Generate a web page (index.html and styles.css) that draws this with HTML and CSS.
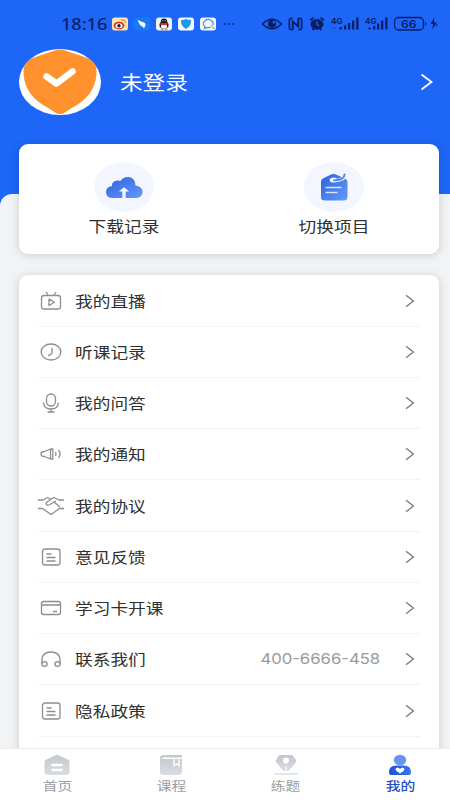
FILE: index.html
```html
<!DOCTYPE html>
<html lang="zh-CN">
<head>
<meta charset="utf-8">
<title>我的</title>
<link rel="stylesheet" href="styles.css">
</head>
<body>
<svg class="defs" width="0" height="0">
  <defs>
    <linearGradient id="blue" x1="0" y1="0" x2="1" y2="1"><stop offset="0" stop-color="#2b62dc"/><stop offset="1" stop-color="#6699fb"/></linearGradient>
    <linearGradient id="person" x1="0" y1="0" x2="1" y2="0"><stop offset="0" stop-color="#1f55d5"/><stop offset="1" stop-color="#3973f2"/></linearGradient>
    <linearGradient id="grey" x1="0" y1="0" x2="0" y2="1"><stop offset="0" stop-color="#c3c8ce"/><stop offset="1" stop-color="#d9dce2"/></linearGradient>
    <symbol id="chevron" viewBox="0 0 10 14"><path d="M1 1.200 8.400 7 1 12.800"/></symbol>
    <symbol id="note" viewBox="0 0 28 20"><rect x="5.500" y="2" width="17.500" height="16" rx="2.500"/><path d="M9.500 7h5M9.500 10.500h9M9.500 14h9"/></symbol>
  </defs>
</svg>
<div class="phone">
  <header class="header">
    <div class="status">
      <span class="clock">18:16</span>
      <svg class="apps" width="125" height="16" viewBox="111 16 125 16">
        <rect x="112" y="17.5" width="16" height="13" rx="3" fill="#ffe6a8"/>
        <ellipse cx="119" cy="25.5" rx="5.3" ry="3.8" fill="#d9282f"/><ellipse cx="119" cy="25.7" rx="3.6" ry="2.5" fill="#fff"/><circle cx="119" cy="25.8" r="1.7" fill="#222"/><path d="M121 20q4-1 4.500 3" fill="none" stroke="#ef862b" stroke-width="1.300"/>
        <rect x="134" y="17.500" width="16" height="13" rx="3" fill="#1679f5"/><path d="M137.500 20l7.500 3 .5 2-1.500 3.500-1-1.500-3-2z" fill="#fff"/>
        <rect x="156" y="17.500" width="16" height="13" rx="3" fill="#f2f3f7"/><ellipse cx="164" cy="25" rx="4.600" ry="4" fill="#171923"/><ellipse cx="164" cy="21.500" rx="3.200" ry="3" fill="#171923"/><ellipse cx="164" cy="26.300" rx="3" ry="2.500" fill="#fff"/><path d="M160.500 23.500q3.500 1.800 7 0" stroke="#df3030" stroke-width="1.600" fill="none"/><path d="M161 29.500h2.500M165 29.500h2.500" stroke="#f39c24" stroke-width="1.300"/><path d="M162.500 20.800h.8M164.800 20.800h.8" stroke="#fff"/>
        <rect x="178" y="17.500" width="16" height="13" rx="3" fill="#f5faff"/><path d="M186 19q3 1.300 5 1 .5 6-5 9-5.500-3-5-9 2 .3 5-1z" fill="#169ae9"/>
        <rect x="200" y="17.500" width="16" height="13" rx="3" fill="#f5f8fc"/><path d="M211 27q-2 1-4 .5l-2.500 1 .4-2q-3-2.500-.5-5.200 3.500-3.500 7.500-.3 2 2 .8 4" fill="none" stroke="#4690dc" stroke-width="1.200"/><circle cx="212" cy="26" r="1" fill="#f5a832"/><circle cx="213.500" cy="28" r="1" fill="#4bc478"/>
        <g fill="#0a2a80"><circle cx="225" cy="24" r="1"/><circle cx="229.200" cy="24" r="1"/><circle cx="233.400" cy="24" r="1"/></g>
      </svg>
      <svg class="signals" width="178" height="18" viewBox="261 15 178 18" fill="#081f66">
        <path d="M262.500 24q9.500-9.500 19 0-9.500 9.500-19 0z" fill="none" stroke="#081f66" stroke-width="1.500"/><circle cx="272" cy="23.800" r="4"/><circle cx="273.800" cy="22.200" r="1.200" fill="#1d66f5"/>
        <g fill="none" stroke="#081f66" stroke-width="1.600"><path d="M292.500 18.300h-1q-2.200 0-2.200 2.500v6.500q0 2.500 2.200 2.500h1M298.500 18.300h1q2.200 0 2.200 2.500v6.500q0 2.500-2.200 2.500h-1"/><path d="M292.700 30v-8.500l5.600 5V18" stroke-width="2"/></g>
        <ellipse cx="317" cy="24.300" rx="6.500" ry="5.400"/><path d="M310 20.300l3.500-2.600M324 20.300l-3.500-2.600M312.500 30l2-2M321.500 30l-2-2" stroke="#081f66" stroke-width="1.800"/><path d="M317 21v3.500l2.300 1.500" stroke="#1d66f5" stroke-width="1.200" fill="none"/>
        <text x="331" y="23.500" class="net" textLength="11.500" lengthAdjust="spacingAndGlyphs">4G</text><path d="M339.500 27h2.300v2.500h-2.300zM344 25.500h2.300v4H344zM348 23h2.300v6.500H348zM352 20.500h2.300v9H352zM356.200 17.500h2.300v12h-2.300z"/><path d="M332 28h4" stroke="#234fb5"/>
        <text x="365" y="23.500" class="net" textLength="11.500" lengthAdjust="spacingAndGlyphs">4G</text><path d="M368.500 27.500h2.300v2h-2.300zM373 26h2.300v3.500H373zM377 23.500h2.300v6H377zM381 20.500h2.300v9H381zM385.200 17.500h2.300v12h-2.300z"/>
        <rect x="394.500" y="17.500" width="29" height="12.500" rx="4" fill="none" stroke="#081f66" stroke-width="1.300"/><path d="M425.300 21.500q2.400 2.300 0 4.600z"/>
        <text x="401" y="27.900" class="charge" textLength="15.500" lengthAdjust="spacingAndGlyphs">66</text>
        <path d="M434.300 17.500l-3.800 6.500h2.700l-1 5.500 4.600-7h-2.900z"/><path d="M436 24.500h1.500l-1.200 3" />
      </svg>
    </div>
    <div class="profile">
      <svg class="avatar" width="82" height="68" viewBox="0 0 82 68"><ellipse cx="41" cy="34" rx="41" ry="33" fill="#fff"/><path d="M41 1.500Q46 2 52 4.500 64 8 71 11.500 77 15 77.500 22C78 36 72 48 58 57Q49 62 46 64.500 41 67.500 36 64.500 33 62 24 57C10 48 4 36 4.500 22Q5 15 11 11.500 18 8 30 4.500 36 2 41 1.500z" fill="#ff922d"/><path d="M27.500 28.500 37.500 35.500 53.500 23.500" fill="none" stroke="#fff" stroke-width="6.500" stroke-linecap="round" stroke-linejoin="round"/></svg>
      <span class="name">未登录</span>
      <svg class="go" width="13" height="18" viewBox="0 0 13 18"><path d="M1.500 1.500 11.500 9l-10 7.500"/></svg>
    </div>
  </header>
  <main class="content">
    <section class="card actions">
      <div class="action">
        <svg width="60" height="50" viewBox="0 0 60 50"><ellipse cx="30" cy="25" rx="30" ry="25" fill="#f3f6fe"/><path d="M18 36q-6-.5-6-6 0-5 6-6-.5-5 6-5.500 1.500 0 2.500.5Q29 15 34 15q7 0 7.500 8.500 7 1 7 6.500T42 36z" fill="url(#blue)"/><path d="M28.300 36v-6.500h-3.500l5.200-4.300 5.200 4.300h-3.500v6.500z" fill="#f4f7ff"/></svg>
        <span class="label">下载记录</span>
      </div>
      <div class="action">
        <svg width="60" height="50" viewBox="0 0 60 50"><ellipse cx="30" cy="25" rx="30" ry="25" fill="#f3f6fe"/><path d="M17 19.500q0-2 2-3l7-3.500q3.500-2 7 0l8 3.500q2.500 1 2.500 3.500v15q0 3.500-4 3.500H21q-4 0-4-3.500z" fill="url(#blue)"/><ellipse cx="29.500" cy="18" rx="3.800" ry="2.600" fill="#eff4ff"/><path d="M30.500 18.500Q41 18.500 40.800 12.500" fill="none" stroke="#eff4ff" stroke-width="3.200"/><path d="M30 18.300Q40.500 18.300 40.500 12.500" fill="none" stroke="#4b7de7" stroke-width="1.800" stroke-linecap="round"/><path d="M21.500 25.500h16M21.500 30.500h12" stroke="#d6e4ff" stroke-width="1.500"/></svg>
        <span class="label">切换项目</span>
      </div>
    </section>
    <section class="card list">
      <div class="row"><svg class="icon" viewBox="0 0 28 20"><rect x="4.500" y="4.500" width="19" height="13.500" rx="2.500"/><path d="M9 1l2 3M19 1l-2 3M12 8v6.500l5.500-3.200z"/></svg><span class="label">我的直播</span><svg class="chev"><use href="#chevron"/></svg></div>
      <div class="row"><svg class="icon" viewBox="0 0 28 20"><ellipse cx="14" cy="10" rx="9.800" ry="8"/><path d="M15 6v4.500q-.2 2-4 3.200"/></svg><span class="label">听课记录</span><svg class="chev"><use href="#chevron"/></svg></div>
      <div class="row"><svg class="icon" viewBox="0 0 28 20"><rect x="9.500" y="1" width="9" height="12" rx="4.500"/><path d="M6.500 9.500q.5 6.500 7.500 6.500t7.500-6.500M14 16v3M10.500 19h7"/></svg><span class="label">我的问答</span><svg class="chev"><use href="#chevron"/></svg></div>
      <div class="row"><svg class="icon" viewBox="0 0 28 20"><path d="M13.500 5v10l-6-2.500Q4 12.500 4 10t3.500-2.500zM13.500 5h2.300v10h-2.300M18.500 8q1 2 0 4M21.500 6q3 4 0 8"/></svg><span class="label">我的通知</span><svg class="chev"><use href="#chevron"/></svg></div>
      <div class="row"><svg class="icon" viewBox="0 0 28 20"><path d="M1 4h5l4.500-2.500 3.500 2M27 4h-5l-5-2.500-3.500 2L9 7q.5 3.500 4 1.500l4-2.500 6 5M17 6l2-1M1 12.500h4.500l8.500 6 8.500-6H27"/></svg><span class="label">我的协议</span><svg class="chev"><use href="#chevron"/></svg></div>
      <div class="row"><svg class="icon"><use href="#note"/></svg><span class="label">意见反馈</span><svg class="chev"><use href="#chevron"/></svg></div>
      <div class="row"><svg class="icon" viewBox="0 0 28 20"><rect x="4.500" y="3.500" width="19" height="13" rx="2"/><path d="M4.500 7h19M16 13.500h4"/></svg><span class="label">学习卡开课</span><svg class="chev"><use href="#chevron"/></svg></div>
      <div class="row"><svg class="icon" viewBox="0 0 28 20"><path d="M5 15v-4.500Q5.500 3 14 3t9 7.500V15"/><ellipse cx="7.500" cy="15" rx="2.700" ry="2.400"/><ellipse cx="20.500" cy="15" rx="2.700" ry="2.400"/></svg><span class="label">联系我们</span><span class="number">400-6666-458</span><svg class="chev"><use href="#chevron"/></svg></div>
      <div class="row"><svg class="icon"><use href="#note"/></svg><span class="label">隐私政策</span><svg class="chev"><use href="#chevron"/></svg></div>
    </section>
  </main>
  <nav class="tabs">
    <div class="tab"><svg width="26" height="22" viewBox="0 0 26 22"><path d="M.5 8Q.5 6.500 2 5.800l9.500-4.600q1.500-.8 3 0L24 5.800q1.500.7 1.500 2.200v10q0 3-3.500 3H4q-3.500 0-3.500-3z" fill="url(#grey)"/><path d="M8.500 11h9M8.500 16h9" stroke="#fff" stroke-width="2.600" stroke-linecap="round"/></svg><span>首页</span></div>
    <div class="tab"><svg width="26" height="22" viewBox="0 0 26 22"><path d="M2 4q0-3 3.500-3H23q1 0 1 1v16q0 3-3.500 3h-15Q2 21 2 18z" fill="url(#grey)"/><path d="M4.500 4.300h19.500M16 5v6.500l2.500-1.500 2.500 1.500V5" fill="none" stroke="#fff" stroke-width="1.400"/></svg><span>课程</span></div>
    <div class="tab"><svg width="26" height="22" viewBox="0 0 26 22"><path d="M7 1h11.500q1.200 0 1.800 1L23 6q.7 1.200 0 2.200L15.500 17h-5L3 8.200Q2.300 7.200 3 6l2.300-4Q6 1 7 1z" fill="url(#grey)"/><circle cx="13" cy="6.500" r="3" fill="#fff"/><path d="M13 12v5" stroke="#fff"/><path d="M1 20h24" stroke="#d9dce2" stroke-width="1.500"/></svg><span>练题</span></div>
    <div class="tab active"><svg width="26" height="22" viewBox="0 0 26 22"><ellipse cx="13" cy="6" rx="6.200" ry="5.200" fill="#6795ef"/><path d="M2 18q0-6.500 7-6.500h8q7 0 7 6.500 0 3-2 3H4q-2 0-2-3z" fill="url(#person)"/><path d="M13 19.500l-4-3q-1.200-2 1-2.700 1.800-.3 3 1.200 1.200-1.500 3-1.200 2.200.7 1 2.700z" fill="#fff"/></svg><span>我的</span></div>
  </nav>
</div>
</body>
</html>
```
FILE: styles.css
```css
* { box-sizing: border-box; }
body {
  margin: 0;
  font-family: "Noto Sans CJK SC", sans-serif;
  color: #303030;
  background: #fff;
}
.defs { display: block; }
.phone {
  width: 450px;
  height: 800px;
  display: flex;
  flex-direction: column;
  overflow: hidden;
  background: linear-gradient(#1d66f7 0 230px, #f2f3f5 230px);
}
.header { height: 194px; flex: none; }
.status {
  height: 48px;
  padding-left: 61px;
  display: flex;
  align-items: center;
}
.clock {
  width: 50px;
  font: 500 16px/20px "Noto Sans", sans-serif;
  color: #0a2168;
  white-space: nowrap;
  transform: scaleX(1.13);
  transform-origin: left;
}
.signals { margin-left: 25px; }
.net { font: 700 8px Inter, sans-serif; }
.charge { font: 600 11px Inter, sans-serif; }
.profile {
  height: 68px;
  padding: 0 17px 0 19px;
  display: flex;
  align-items: center;
}
.name {
  margin-left: 19px;
  flex: 1;
  font-size: 19px;
  line-height: 28px;
  color: #fff;
  transform: scaleX(1.19);
  transform-origin: left;
}
.go { fill: none; stroke: #fff; stroke-width: 1.8; }
.content {
  flex: 1;
  min-height: 0;
  padding: 0 11px 0 19px;
  background: #f2f3f5;
  border-radius: 12px 0 0 0;
}
.card {
  background: #fff;
  box-shadow: 0 1px 10px rgba(0, 0, 0, .16);
}
.actions {
  height: 110px;
  margin-top: -50px;
  border-radius: 9px;
  display: grid;
  grid-template-columns: 1fr 1fr;
}
.action {
  display: flex;
  flex-direction: column;
  align-items: center;
  padding-top: 18px;
}
.label {
  font-size: 15px;
  line-height: 22px;
  white-space: nowrap;
  transform: scaleX(1.18);
  transform-origin: left;
}
.action .label { margin-top: 3px; transform-origin: center; }
.list {
  height: 500px;
  margin-top: 21px;
  border-radius: 9px 9px 0 0;
  padding: .4px 19px 0;
}
.row {
  height: 51.25px;
  border-bottom: 1px solid #f4f4f4;
  display: flex;
  align-items: center;
}
.row .label { margin: 0 0 0 10px; flex: 1; }
.icon {
  width: 28px;
  height: 20px;
  margin-left: -1px;
  fill: none;
  stroke: #8d8d8d;
  stroke-width: 1.3;
  stroke-linejoin: round;
}
.number {
  font: 14.5px/22px Inter, sans-serif;
  color: #999;
  margin-right: 25px;
  transform: scaleX(1.15);
  transform-origin: right;
}
.chev {
  width: 10px;
  height: 14px;
  margin-right: 5px;
  fill: none;
  stroke: #777;
  stroke-width: 1.3;
}
.tabs {
  height: 52px;
  flex: none;
  display: grid;
  grid-template-columns: repeat(4, 114.3px);
  background: #fff;
  border-top: 1px solid #ededed;
}
.tab {
  display: flex;
  flex-direction: column;
  align-items: center;
  padding-top: 5px;
  font-size: 12.5px;
  line-height: 20px;
  color: #9a9da2;
}
.tab span { transform: scaleX(1.18); }
.tab.active { color: #1e50bd; font-weight: 500; }
```
